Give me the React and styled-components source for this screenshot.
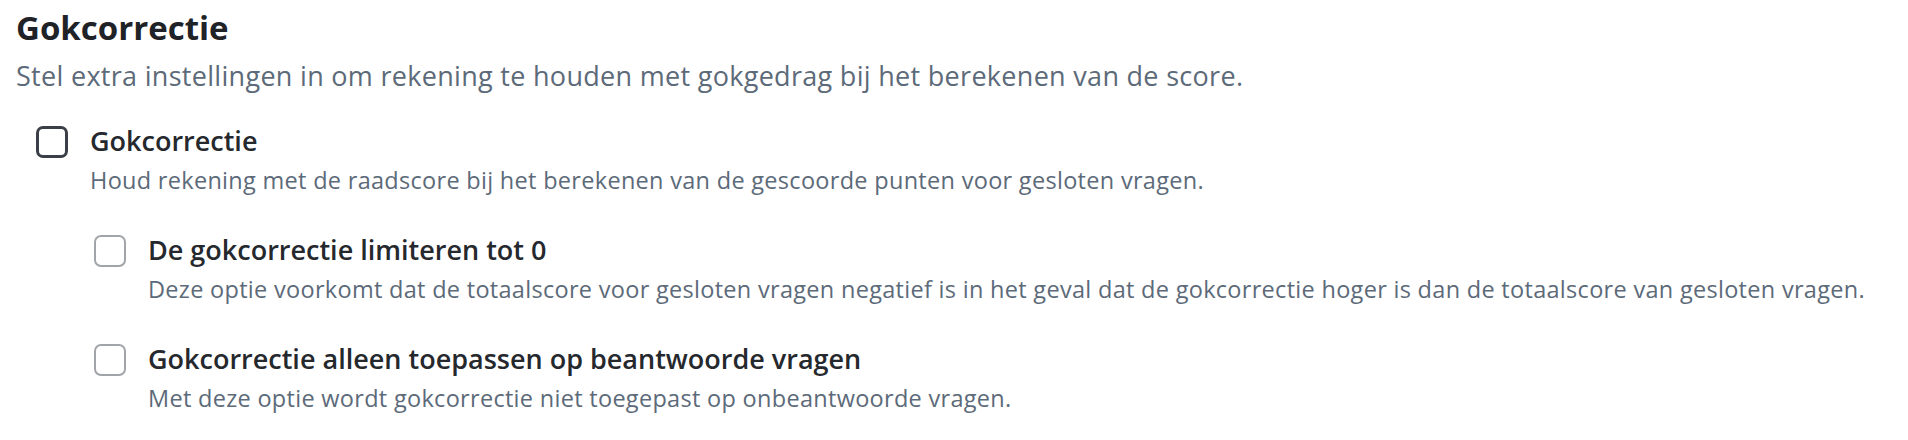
import React from 'react';
import styled, { createGlobalStyle } from 'styled-components';

const GlobalStyle = createGlobalStyle`
	html, body {
		margin: 0;
		padding: 0;
		background: #ffffff;
	}
	body {
		font-family: 'Open Sans', 'Noto Sans', sans-serif;
		-webkit-font-smoothing: antialiased;
	}
`;

const options = [
	{
		id: 'guess-correction',
		label: 'Gokcorrectie',
		description:
			'Houd rekening met de raadscore bij het berekenen van de gescoorde punten voor gesloten vragen.',
		children: [
			{
				id: 'limit-zero',
				label: 'De gokcorrectie limiteren tot 0',
				description:
					'Deze optie voorkomt dat de totaalscore voor gesloten vragen negatief is in het geval dat de gokcorrectie hoger is dan de totaalscore van gesloten vragen.',
			},
			{
				id: 'answered-only',
				label: 'Gokcorrectie alleen toepassen op beantwoorde vragen',
				description:
					'Met deze optie wordt gokcorrectie niet toegepast op onbeantwoorde vragen.',
			},
		],
	},
];

function Option({ option, disabled }) {
	return (
		<Item>
			<Row>
				<Checkbox type='checkbox' id={option.id} disabled={disabled} />
				<Text>
					<Label htmlFor={option.id}>{option.label}</Label>
					<Description>{option.description}</Description>
				</Text>
			</Row>
			{option.children && (
				<SubList>
					{option.children.map((child) => (
						<Option key={child.id} option={child} disabled />
					))}
				</SubList>
			)}
		</Item>
	);
}

export default function App() {
	return (
		<>
			<GlobalStyle />
			<Section>
				<Title>Gokcorrectie</Title>
				<Intro>
					Stel extra instellingen in om rekening te houden met gokgedrag bij het
					berekenen van de score.
				</Intro>
				<List>
					{options.map((option) => (
						<Option key={option.id} option={option} />
					))}
				</List>
			</Section>
		</>
	);
}

const Section = styled.section`
	padding: 8px 16px 0 16px;
`;
const Title = styled.h2`
	margin: 0;
	font-size: 33px;
	line-height: 40px;
	font-weight: 700;
	color: #1f2328;
`;
const Intro = styled.p`
	margin: 10px 0 0 0;
	font-size: 27px;
	line-height: 36px;
	letter-spacing: 0.3px;
	color: #5c6a79;
`;
const List = styled.div`
	display: flex;
	flex-direction: column;
	margin: 29px 0 0 20px;
`;
const SubList = styled.div`
	display: flex;
	flex-direction: column;
	gap: 36px;
	margin: 36px 0 0 58px;
`;
const Item = styled.div`
	display: flex;
	flex-direction: column;
`;
const Row = styled.div`
	display: flex;
	align-items: flex-start;
	gap: 22px;
`;
const Checkbox = styled.input`
	appearance: none;
	-webkit-appearance: none;
	flex: none;
	margin: 3px 0 0 0;
	width: 32px;
	height: 32px;
	box-sizing: border-box;
	border: 3px solid #3b4048;
	border-radius: 7px;
	background: #ffffff;
	&:disabled {
		border-width: 2.5px;
		border-color: #a1a5a9;
	}
`;
const Text = styled.div`
	display: flex;
	flex-direction: column;
	gap: 5px;
`;
const Label = styled.label`
	font-size: 27px;
	line-height: 36px;
	font-weight: 600;
	color: #25282d;
`;
const Description = styled.span`
	font-size: 23.5px;
	line-height: 32px;
	letter-spacing: 0.3px;
	color: #5c6a79;
`;
